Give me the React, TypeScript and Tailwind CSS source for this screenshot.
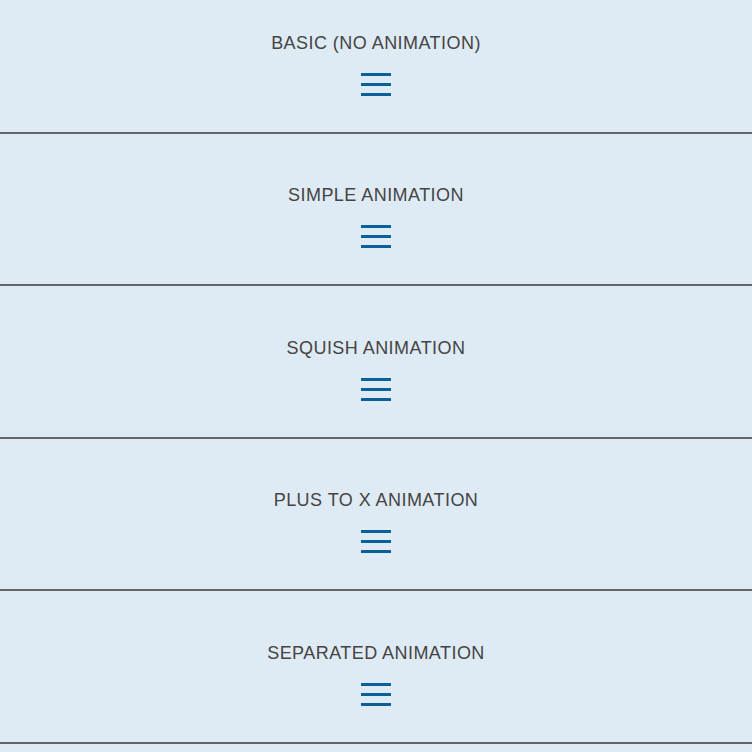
const demos = [
  "BASIC (NO ANIMATION)",
  "SIMPLE ANIMATION",
  "SQUISH ANIMATION",
  "PLUS TO X ANIMATION",
  "SEPARATED ANIMATION",
];

export default function App() {
  return (
    <div className="min-h-screen bg-[#dfebf4] font-['Liberation_Sans',Arial,sans-serif]">
      {demos.map((title, i) => (
        <section
          key={title}
          className={[
            "flex flex-col items-center border-b-2 border-[#62676b] pb-[36px]",
            i === 0 ? "pt-[32.5px]" : "pt-[51.5px]",
          ].join(" ")}
        >
          <h2 className="text-[18px] leading-[20px] tracking-[0.45px] text-[#444]">{title}</h2>
          <button type="button" className="mt-[20px] flex h-[23px] w-[30px] flex-col justify-between" aria-label="menu">
            <span className="block h-[3px] w-full bg-[#0b6098]" />
            <span className="block h-[3px] w-full bg-[#0b6098]" />
            <span className="block h-[3px] w-full bg-[#0b6098]" />
          </button>
        </section>
      ))}
    </div>
  );
}
